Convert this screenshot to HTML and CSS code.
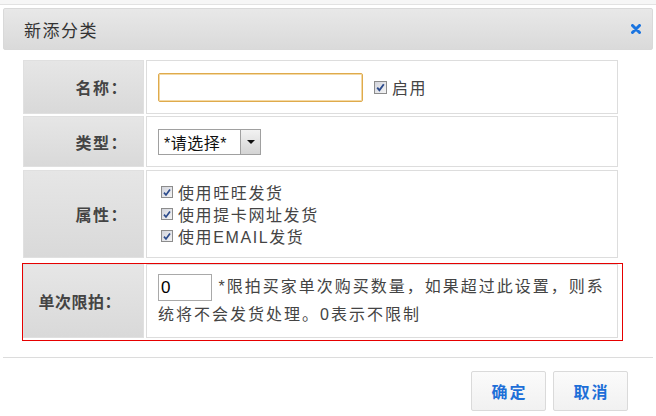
FILE: index.html
```html
<!DOCTYPE html>
<html lang="zh-CN">
<head>
<meta charset="utf-8">
<title>新添分类</title>
<link rel="stylesheet" href="styles.css">
</head>
<body>
<div class="topline"></div>
<div class="header">
  <span class="title">新添分类</span>
  <svg class="close" width="10" height="10" viewBox="0 0 10 10"><path d="M1.5 1.5 L8.5 8.5 M8.5 1.5 L1.5 8.5" stroke="#1a74e0" stroke-width="3" stroke-linecap="round"/></svg>
</div>
<div class="form">
  <div class="row row-name">
    <div class="label wide">名称：</div>
    <div class="value">
      <span class="text-input name-input"></span>
      <span class="cb first-cb"><svg width="11" height="11" viewBox="0 0 11 11"><path d="M2.2 5.6 L4.4 8.2 L8.8 2.2" stroke="#2c4b8c" stroke-width="1.9" fill="none"/></svg></span>
      <span class="cb-text">启用</span>
    </div>
  </div>
  <div class="row row-type">
    <div class="label wide">类型：</div>
    <div class="value">
      <div class="select">
        <span class="select-text">*请选择*</span>
        <span class="select-btn"><span class="tri"></span></span>
      </div>
    </div>
  </div>
  <div class="row row-attr">
    <div class="label wide">属性：</div>
    <div class="value">
      <div class="attr-list">
        <div class="attr"><span class="cb"><svg width="11" height="11" viewBox="0 0 11 11"><path d="M2.2 5.6 L4.4 8.2 L8.8 2.2" stroke="#2c4b8c" stroke-width="1.9" fill="none"/></svg></span><span class="cb-text">使用旺旺发货</span></div>
        <div class="attr"><span class="cb"><svg width="11" height="11" viewBox="0 0 11 11"><path d="M2.2 5.6 L4.4 8.2 L8.8 2.2" stroke="#2c4b8c" stroke-width="1.9" fill="none"/></svg></span><span class="cb-text">使用提卡网址发货</span></div>
        <div class="attr"><span class="cb"><svg width="11" height="11" viewBox="0 0 11 11"><path d="M2.2 5.6 L4.4 8.2 L8.8 2.2" stroke="#2c4b8c" stroke-width="1.9" fill="none"/></svg></span><span class="cb-text">使用EMAIL发货</span></div>
      </div>
    </div>
  </div>
  <div class="limit-box">
    <div class="row row-limit">
      <div class="label">单次限拍：</div>
      <div class="value">
        <p class="desc"><span class="text-input num-input">0</span> *限拍买家单次购买数量，如果超过此设置，则系统将不会发货处理。0表示不限制</p>
      </div>
    </div>
  </div>
</div>
<div class="divider"></div>
<div class="actions">
  <button class="btn">确定</button>
  <button class="btn">取消</button>
</div>
</body>
</html>
```

FILE: styles.css
```css
* { box-sizing: border-box; }
html, body { margin: 0; padding: 0; background: #fff; }
body {
  width: 656px;
  height: 416px;
  overflow: hidden;
  font-family: "Liberation Sans", "Noto Sans CJK SC", sans-serif;
  color: #444;
}
.topline {
  height: 5px;
  background: #f6f6f6;
  border-bottom: 1px solid #e2e2e2;
}
.header {
  margin: 3px 3px 0 3px;
  height: 42px;
  border: 1px solid #d9d9d9;
  border-radius: 2px;
  background: linear-gradient(#e8e8e8, #dadada);
  display: flex;
  align-items: center;
  justify-content: space-between;
  padding: 0 11px 0 20px;
}
.title {
  font-size: 17px;
  letter-spacing: 1.5px;
  color: #333;
}
.close { display: block; }
.form {
  padding: 10px 0 0 23px;
  display: flex;
  flex-direction: column;
  gap: 2px;
}
.row {
  display: flex;
  gap: 2px;
}
.row-name { height: 54px; }
.row-type { height: 51px; }
.row-attr { height: 88px; margin-top: 1px; }
.row-limit { height: 74px; }
.label {
  width: 121px;
  flex: none;
  border: 1px solid #e0e0e0;
  background: linear-gradient(#e6e6e6, #d9d9d9);
  display: flex;
  align-items: center;
  justify-content: flex-end;
  padding-right: 22px;
  font-size: 16px;
  font-weight: bold;
  color: #444;
}
.label.wide { letter-spacing: 1.5px; padding-right: 15px; }
.value {
  width: 472px;
  flex: none;
  border: 1px solid #ddd;
  background: #fff;
  display: flex;
  align-items: center;
  padding-left: 11px;
  font-size: 16px;
  color: #444;
}
.text-input {
  display: inline-block;
  border: 1px solid #a9a9a9;
  background: #fff;
}
.name-input {
  width: 205px;
  height: 29px;
  border-color: #dfaa4c;
  border-radius: 2px;
  box-shadow: inset 0 0 0 1px #f3d9a6;
}
.cb {
  display: inline-flex;
  width: 13px;
  height: 13px;
  border: 1px solid #8c8c8c;
  background: linear-gradient(135deg, #d2d4dc, #f4f4f4);
  align-items: center;
  justify-content: center;
  flex: none;
}
.cb svg { display: block; }
.first-cb { margin-left: 11px; }
.cb-text {
  margin-left: 5px;
  letter-spacing: 1.6px;
  color: #444;
}
.select {
  width: 103px;
  height: 26px;
  border: 1px solid #a0a0a0;
  display: flex;
  align-items: stretch;
  background: #fff;
}
.select-text {
  flex: 1;
  display: flex;
  align-items: center;
  padding-left: 5px;
  font-size: 16px;
  letter-spacing: 0.5px;
  color: #111;
}
.select-btn {
  width: 20px;
  border-left: 1px solid #a0a0a0;
  background: linear-gradient(#f2f2f2, #d4d4d4);
  display: flex;
  align-items: center;
  justify-content: center;
}
.tri {
  width: 0;
  height: 0;
  border-left: 4px solid transparent;
  border-right: 4px solid transparent;
  border-top: 4px solid #111;
}
.attr-list {
  display: flex;
  flex-direction: column;
  padding-left: 3px;
}
.attr {
  display: flex;
  align-items: center;
  height: 22px;
}
.attr .cb { width: 12px; height: 12px; }
.attr .cb-text { margin-left: 5px; }
.limit-box {
  margin-left: -1px;
  margin-top: 3px;
  width: 601px;
  border: 1px solid #e60000;
  padding: 0 3px 2px 0;
}
.row-limit .label { letter-spacing: 0.5px; }
.row-limit .value { padding-right: 5px; }
.desc {
  margin: 0;
  line-height: 28px;
  letter-spacing: 2px;
  color: #444;
}
.num-input {
  width: 54px;
  height: 27px;
  line-height: 25px;
  vertical-align: middle;
  padding-left: 2px;
  color: #000;
  font-size: 17px;
  letter-spacing: 0;
}
.divider {
  margin: 16px 3px 0 3px;
  border-top: 1px solid #dcdcdc;
}
.actions {
  display: flex;
  justify-content: flex-end;
  gap: 7px;
  padding: 13px 28px 0 0;
}
.btn {
  width: 75px;
  height: 40px;
  border: 1px solid #dadada;
  border-radius: 2px;
  background: linear-gradient(#fbfbfb, #f1f1f1);
  font-family: "Liberation Sans", "Noto Sans CJK SC", sans-serif;
  font-size: 16px;
  font-weight: bold;
  letter-spacing: 2px;
  color: #1e6fd8;
  padding: 0 0 0 2px;
}
```
